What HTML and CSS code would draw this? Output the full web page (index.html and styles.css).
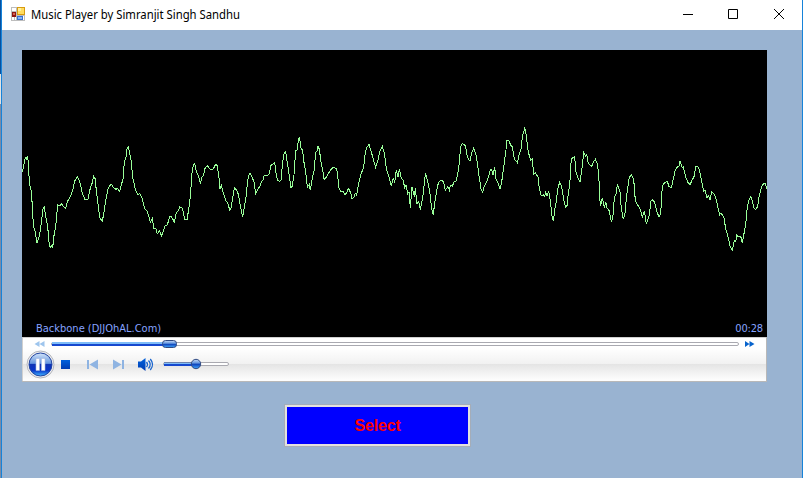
FILE: index.html
```html
<!DOCTYPE html>
<html lang="en">
<head>
<meta charset="utf-8">
<title>Music Player by Simranjit Singh Sandhu</title>
<link rel="stylesheet" href="styles.css">
</head>
<body>
<div class="edge"><i class="edge-top"></i><i class="edge-mid"></i></div>
<main class="window">
  <header class="titlebar">
    <svg class="app-icon" width="14" height="14" viewBox="0 0 14 14" shape-rendering="crispEdges">
      <path fill="#bdbdbd" d="M0 0h14v14H0z"/><path fill="#fff" d="M1 1h4v3H1zM1 10h2v3H1zM4 10h1v3H4zM12 9h1v4h-1z"/>
      <path fill="#d89b10" d="M6 0h8v8H6z"/><path fill="#ffdc60" d="M7 1h6v6H7z"/><path fill="#fff0a0" d="M7 1h3v3H7z"/>
      <path fill="#8d1614" d="M1 5h4v5H1z"/><path fill="#d96050" d="M2 6h2v2H2z"/>
      <path fill="#3970d0" d="M6 9h6v4H6z"/><path fill="#84b5f5" d="M7 10h4v2H7z"/>
    </svg>
    <h1><svg width="240" height="24"><text x="0" y="16" textLength="209" lengthAdjust="spacingAndGlyphs">Music Player by Simranjit Singh Sandhu</text></svg></h1>
    <nav class="window-buttons">
      <svg width="12" height="12" viewBox="0 0 12 12"><path d="M1 6.5h10"/></svg>
      <svg width="12" height="12" viewBox="0 0 12 12"><path d="M1.5 1.5h9v9h-9z"/></svg>
      <svg class="close" width="12" height="12" viewBox="0 0 12 12"><path d="M1 1l10 10M11 1L1 11"/></svg>
    </nav>
  </header>
  <section class="player">
    <div class="screen">
      <svg class="wave" width="745" height="265" viewBox="6 -210 2235 795" shape-rendering="crispEdges">
        <polyline points="6,155 9,148 13,127 16,114 19,118 22,108 25,126 28,188 33,211 37,255 40,317 45,332 51,370 57,350 62,325 66,290 69,268 73,261 77,290 83,320 88,376 92,383 95,378 98,385 101,352 107,320 113,255 121,256 125,251 130,259 137,265 142,244 149,234 158,212 164,183 172,169 179,184 187,219 195,239 204,238 211,204 217,188 221,169 225,175 230,220 236,268 240,295 247,304 252,276 258,236 264,207 273,191 281,203 288,208 292,205 299,215 304,195 309,177 313,125 318,111 321,87 325,81 329,99 334,125 338,172 346,208 353,224 359,221 365,230 374,265 382,274 391,306 397,296 402,326 407,325 412,341 419,332 425,349 435,318 442,315 449,290 455,291 463,306 469,278 474,274 479,261 487,264 494,298 501,300 506,268 512,220 515,165 520,137 524,130 530,158 536,168 541,191 546,171 551,165 555,145 562,137 569,147 578,150 587,133 592,137 598,180 600,208 604,195 610,220 618,242 624,251 629,270 632,269 638,235 643,203 646,207 650,209 656,226 661,258 668,290 673,261 678,230 683,180 688,161 691,160 697,174 702,185 707,220 714,207 719,200 724,186 729,180 733,165 744,165 748,160 753,136 760,132 764,127 768,158 772,180 779,184 783,180 788,125 792,102 797,94 801,122 807,162 813,204 816,200 822,164 827,92 831,90 834,68 838,50 843,83 848,92 853,136 857,154 862,201 868,193 871,211 878,169 882,155 887,98 892,92 894,77 898,88 903,126 908,150 912,178 919,171 925,161 932,150 939,142 950,146 954,177 957,204 963,215 968,213 975,225 981,216 985,205 992,218 996,236 1001,233 1006,220 1010,225 1015,195 1022,165 1031,142 1036,95 1041,82 1047,73 1054,96 1062,126 1067,142 1073,124 1080,93 1087,79 1093,99 1099,147 1107,170 1114,198 1120,173 1124,188 1129,150 1134,171 1138,146 1143,172 1149,180 1154,202 1158,195 1163,221 1167,216 1171,264 1176,200 1183,230 1186,205 1191,251 1196,244 1201,270 1207,237 1211,214 1213,182 1217,160 1220,174 1226,196 1230,223 1235,266 1240,284 1244,248 1250,213 1255,189 1262,181 1270,184 1276,210 1284,200 1288,210 1291,195 1297,198 1303,185 1309,182 1316,145 1322,81 1327,70 1336,77 1341,104 1346,120 1351,121 1355,98 1361,85 1369,107 1376,160 1383,206 1388,216 1393,198 1402,182 1411,150 1415,148 1419,165 1424,142 1428,178 1434,190 1440,208 1445,186 1452,136 1458,89 1460,62 1467,62 1472,76 1477,80 1483,118 1492,128 1497,106 1503,87 1507,50 1511,36 1514,25 1517,34 1525,97 1532,120 1537,117 1541,162 1546,158 1554,172 1558,206 1564,228 1570,225 1574,230 1577,217 1581,229 1586,212 1592,248 1595,285 1600,303 1605,265 1610,240 1612,210 1619,187 1624,196 1631,238 1637,262 1641,257 1646,211 1649,197 1653,130 1656,115 1664,109 1667,152 1674,173 1680,185 1687,139 1691,97 1696,108 1700,103 1705,131 1716,139 1720,125 1726,118 1732,132 1736,162 1740,242 1742,257 1747,233 1753,263 1757,245 1761,264 1767,271 1774,304 1778,298 1783,233 1788,222 1792,194 1800,215 1804,266 1810,298 1815,279 1820,225 1828,172 1834,165 1841,177 1846,242 1855,258 1861,268 1867,291 1873,272 1879,311 1888,285 1893,242 1897,239 1904,247 1910,274 1917,290 1922,281 1927,198 1933,189 1942,184 1947,200 1954,203 1961,172 1966,150 1971,142 1977,138 1980,124 1986,142 1990,141 1997,171 2003,186 2010,194 2015,183 2023,168 2027,140 2034,141 2039,152 2044,180 2051,213 2055,210 2061,233 2066,228 2070,239 2075,215 2084,224 2089,239 2094,265 2099,284 2103,279 2113,295 2116,322 2123,347 2131,381 2137,390 2143,361 2147,365 2151,344 2155,351 2162,348 2167,370 2173,335 2178,305 2182,260 2187,240 2192,230 2197,242 2202,265 2207,269 2213,259 2218,225 2225,201 2231,190 2235,190 2241,207"/>
      </svg>
      <div class="info"><span>Backbone (DJJOhAL.Com)</span><span>00:28</span></div>
    </div>
    <div class="controls">
      <svg width="745" height="44" viewBox="22 337 745 44">
        <defs>
          <linearGradient id="blue" x2="0" y2="1"><stop stop-color="#0061dd"/><stop offset="1" stop-color="#003db2"/></linearGradient>
          <linearGradient id="orb" x2="0" y2="1"><stop stop-color="#d5e5fa"/><stop offset=".45" stop-color="#6596df"/><stop offset=".5" stop-color="#1035b6"/><stop offset=".75" stop-color="#0834c8"/><stop offset="1" stop-color="#42b6ff"/></linearGradient>
          <linearGradient id="knob" x2="0" y2="1"><stop stop-color="#c9ddf9"/><stop offset=".42" stop-color="#5e91dc"/><stop offset=".5" stop-color="#0c3eb8"/><stop offset="1" stop-color="#42aaff"/></linearGradient>
        </defs>
        <path fill="#9ec5ed" d="M39.500 341v6l-5-3zM44.500 341v6l-5-3z"/>
        <path fill="#0864cd" d="M745 341v6l4.500-3zM749.500 341v6l5-3z"/>
        <rect x="51.500" y="342.500" width="687" height="3" rx="1.500" fill="#fff" stroke="#a9a9b0"/>
        <path fill="#7ebcf8" d="M52 342h112v2H52z"/><path fill="#1648cf" d="M52 344h112v2H52z"/>
        <rect x="162.500" y="340.500" width="14" height="7" rx="3" fill="url(#knob)" stroke="#304a82"/>
        <circle cx="40.500" cy="364.500" r="13.500" fill="#ededf0" stroke="#b5b7bd"/>
        <circle cx="40.500" cy="364.500" r="11.500" fill="url(#orb)" stroke="#2345a0"/>
        <path fill="#fff" stroke="#a9b9df" stroke-width=".6" d="M36 358.500h3.500v12H36zM41.500 358.500H45v12h-3.500z"/>
        <path fill="url(#blue)" d="M61 360h9v9h-9z"/>
        <path fill="#8fb4e2" d="M87 360h2v9h-2zM98 359.500v10l-8.500-5zM113 359.500v10l8.500-5zM122 360h2v9h-2z"/>
        <path fill="url(#blue)" d="M138 361.500h3l4.500-3.500v13L141 367.500h-3z"/>
        <path fill="none" stroke="#1763cd" stroke-width="1.300" d="M146.500 362q2 2.500 0 5M148.500 360.500q3.500 4 0 8M150.300 359q4.500 5.500 0 11"/>
        <rect x="163.500" y="362.500" width="65" height="3" rx="1.500" fill="#fff" stroke="#a9a9b0"/>
        <path fill="#6d83ad" d="M164 362h29v1h-29z"/><path fill="#7ebcf8" d="M164 363h29v1h-29z"/><path fill="#1648cf" d="M164 364h29v2h-29z"/>
        <circle cx="196" cy="364" r="4.700" fill="url(#knob)" stroke="#304a82"/>
      </svg>
    </div>
  </section>
  <button class="select" type="button">Select</button>
</main>
</body>
</html>
```
FILE: styles.css
```css
* { box-sizing: border-box; }
body { margin: 0; width: 803px; height: 478px; overflow: hidden; display: flex; background: #99b3d1; }
.edge { width: 2px; flex: none; border-right: 1px solid #1683d9; background: #7b8ba6; display: flex; flex-direction: column; }
.edge-top { height: 74px; background: #07519f; }
.edge-mid { height: 30px; background: #e3e3e3; }
.window { flex: 1; min-width: 0; border-right: 1px solid #1683d9; display: flex; flex-direction: column; }
.titlebar { height: 30px; flex: none; background: #fff; display: flex; align-items: center; padding: 0 17px 0 9px; }
.app-icon { margin-top: -2px; }
h1 { margin: 0 0 0 6px; height: 24px; font: 12px "Noto Sans", sans-serif; }
h1 svg { display: block; overflow: visible; }
.window-buttons { margin-left: auto; margin-top: -2px; display: flex; gap: 33px; }
.window-buttons svg { fill: none; stroke: #000; stroke-width: 1; display: block; }
.window-buttons .close { margin-left: 1px; }
.player { width: 745px; margin: 20px 0 0 20px; }
.screen { height: 287px; background: #000; }
.wave { display: block; }
.wave polyline { fill: none; stroke: #99ff99; stroke-width: 3; }
.info { display: flex; justify-content: space-between; padding: 1px 4px 0 14px; font: 11px/26px "DejaVu Sans Condensed", "DejaVu Sans", sans-serif; color: #86a3ff; }
.info span:last-child { letter-spacing: -.15px; }
.controls { height: 45px; background: linear-gradient(#fff 0, #fff 11px, #f1f1f1 27px, #e4e4e4 27px, #fdfdfd 43px); box-shadow: inset -1px -1px #b8b8b8, inset 1px 1px #d0d0d0; }
.controls svg { display: block; }
.select { width: 185px; height: 41px; margin: 23px 0 0 283px; border: 2px solid #e3e1df; box-shadow: 0 0 0 1px #a5adb8; background: #00f; color: #f00; font: bold 16px "Liberation Sans", Arial, sans-serif; letter-spacing: -.15px; padding: 0; }
```
